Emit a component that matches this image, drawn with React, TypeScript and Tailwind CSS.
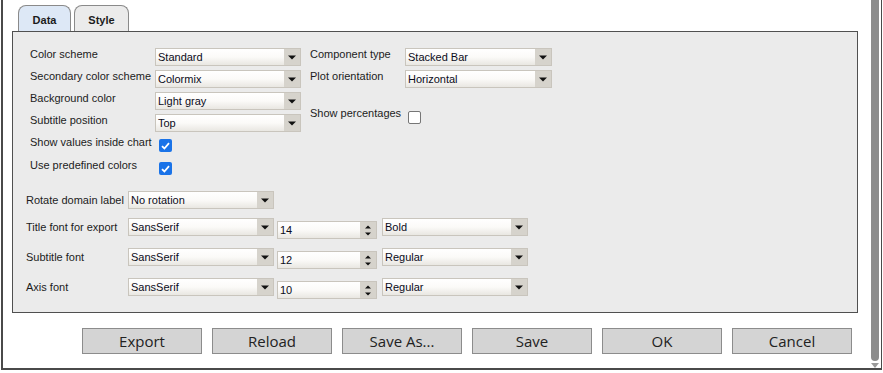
import React from 'react';

const Arrow = () => (
  <svg width="8" height="5" viewBox="0 0 8 5">
    <path d="M0 0.5 L8 0.5 L4 4.5 Z" fill="#111" />
  </svg>
);

const Select: React.FC<{ value: string; w: string }> = ({ value, w }) => (
  <div className={`${w} h-[18px] flex border border-[#c9c5bd] bg-gradient-to-b from-white via-[#fbfaf8] to-[#e9e7e2]`}>
    <div className="flex-1 pl-[2px] text-[11px] leading-[16px] text-[#0b0b1a] truncate">{value}</div>
    <div className="w-[16px] bg-[#d6d3cc] flex items-center justify-center">
      <Arrow />
    </div>
  </div>
);

const Spinner: React.FC<{ value: string }> = ({ value }) => (
  <div className="w-[100px] h-[18px] mt-[3px] ml-[3px] flex border border-[#c9c5bd] bg-gradient-to-b from-white via-[#fbfaf8] to-[#e9e7e2]">
    <div className="flex-1 pl-[2px] text-[11px] leading-[17px] text-[#0b0b1a]">{value}</div>
    <div className="w-[16px] bg-[#d6d3cc] flex flex-col items-center justify-center gap-[3px]">
      <svg width="6" height="4" viewBox="0 0 6 4">
        <path d="M0 3.5 L6 3.5 L3 0.5 Z" fill="#111" />
      </svg>
      <svg width="6" height="4" viewBox="0 0 6 4">
        <path d="M0 0.5 L6 0.5 L3 3.5 Z" fill="#111" />
      </svg>
    </div>
  </div>
);

const Check: React.FC<{ checked?: boolean }> = ({ checked }) =>
  checked ? (
    <div className="w-[13px] h-[13px] rounded-[2px] bg-[#1a73e8] flex items-center justify-center">
      <svg width="9" height="8" viewBox="0 0 9 8">
        <path d="M1 4.2 L3.4 6.5 L8 1.2" stroke="#fff" strokeWidth="1.8" fill="none" />
      </svg>
    </div>
  ) : (
    <div className="w-[13px] h-[13px] rounded-[2px] bg-white border border-[#767676]" />
  );

const topLeft = [
  ['Color scheme', 'Standard'],
  ['Secondary color scheme', 'Colormix'],
  ['Background color', 'Light gray'],
  ['Subtitle position', 'Top'],
];

const fontRows = [
  ['Title font for export', '14', 'Bold', 'mt-[9px]'],
  ['Subtitle font', '12', 'Regular', 'mt-[12px]'],
  ['Axis font', '10', 'Regular', 'mt-[12px]'],
];

const buttons = ['Export', 'Reload', 'Save As...', 'Save', 'OK', 'Cancel'];

export default function App() {
  return (
    <div className="w-[883px] h-[373px] bg-white pl-px font-['Liberation_Sans',Arial,sans-serif] text-[#1c1c1c]">
      <div className="w-[881px] h-[370px] flex border-l-2 border-b-2 border-r border-[#4a4a4a]">
        <div className="w-[868px]">
          {/* tabs */}
          <div className="flex gap-[3px] ml-[15px] mt-[5px]">
            <div className="w-[53px] h-[26px] border border-b-0 border-[#8a8a8a] rounded-t-[8px] bg-[#dde8f6] text-[11px] font-bold leading-[28px] text-center">
              Data
            </div>
            <div className="w-[55px] h-[26px] border border-b-0 border-[#8a8a8a] rounded-t-[8px] bg-[#ebebeb] text-[11px] font-bold leading-[28px] text-center">
              Style
            </div>
          </div>

          {/* panel */}
          <div className="ml-[9px] w-[846px] h-[282px] border border-[#505050] bg-[#ebebeb] pt-[16px] pl-[13px] text-[11px] whitespace-nowrap">
            <div className="flex ml-[4px]">
              <div className="w-[280px]">
                {topLeft.map(([label, value]) => (
                  <div key={label} className="flex h-[22px]">
                    <div className="w-[125px] leading-[12px]">{label}</div>
                    <Select value={value} w="w-[146px]" />
                  </div>
                ))}
                <div className="flex h-[23px]">
                  <div className="w-[129px] leading-[12px]">Show values inside chart</div>
                  <div className="mt-[3px]">
                    <Check checked />
                  </div>
                </div>
                <div className="flex h-[23px]">
                  <div className="w-[129px] leading-[12px]">Use predefined colors</div>
                  <div className="mt-[3px]">
                    <Check checked />
                  </div>
                </div>
              </div>
              <div>
                <div className="flex h-[22px]">
                  <div className="w-[95px] leading-[12px]">Component type</div>
                  <Select value="Stacked Bar" w="w-[147px]" />
                </div>
                <div className="flex h-[22px]">
                  <div className="w-[95px] leading-[12px]">Plot orientation</div>
                  <Select value="Horizontal" w="w-[147px]" />
                </div>
                <div className="flex mt-[15px]">
                  <div className="w-[98px] leading-[12px]">Show percentages</div>
                  <div className="mt-[4px]">
                    <Check />
                  </div>
                </div>
              </div>
            </div>

            <div className="mt-[9px]">
              <div className="flex h-[18px] items-center">
                <div className="w-[102px]">Rotate domain label</div>
                <Select value="No rotation" w="w-[146px]" />
              </div>
              {fontRows.map(([label, size, style, mt]) => (
                <div key={label} className={`flex h-[18px] items-start ${mt}`}>
                  <div className="w-[102px] leading-[18px]">{label}</div>
                  <Select value="SansSerif" w="w-[146px]" />
                  <Spinner value={size} />
                  <div className="ml-[5px]">
                    <Select value={style} w="w-[146px]" />
                  </div>
                </div>
              ))}
            </div>
          </div>

          {/* buttons */}
          <div className="flex gap-[10px] ml-[79px] mt-[15px] font-['Open_Sans',sans-serif]">
            {buttons.map((b) => (
              <div
                key={b}
                className="w-[120px] h-[26px] border border-[#8c8c8c] bg-[#d4d4d4] text-[15px] leading-[24px] text-center text-[#222]"
              >
                {b}
              </div>
            ))}
          </div>
        </div>

        {/* scrollbar */}
        <div className="w-[10px] flex flex-col items-start">
          <div className="w-[8px] h-[361px] bg-[#8c8c8c] rounded-b-[4px]" />
          <svg className="mt-[2px]" width="8" height="5" viewBox="0 0 8 5">
            <path d="M0 0 L8 0 L4 5 Z" fill="#9a9a9a" />
          </svg>
        </div>
      </div>
    </div>
  );
}
